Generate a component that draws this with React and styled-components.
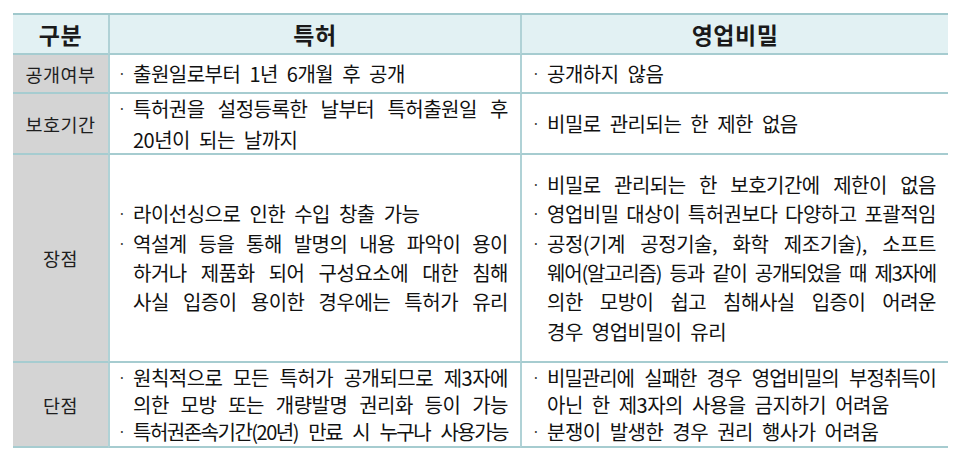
import React from "react";
import styled, { createGlobalStyle } from "styled-components";

const Global = createGlobalStyle`
  html, body { margin: 0; padding: 0; background: #ffffff; }
  body { font-family: "Noto Sans CJK KR", "Noto Sans", sans-serif; color: #111; }
`;

const Page = styled.div`
  padding: 13px 0 0 13px;
  width: 960px;
  height: 457px;
  box-sizing: border-box;
`;

const Table = styled.div`
  display: grid;
  width: 935px;
  grid-template-columns: 95px 412px 428px;
  grid-template-rows: 40px 39px 61px 208px 85px;
  border-top: 2px solid #a0c8cc;
`;

const Cell = styled.div`
  box-sizing: border-box;
  border-bottom: 2px solid #a6ccd0;
  border-left: ${(p) => (p.$first ? "none" : "2px solid #b0d2d6")};
  display: flex;
  flex-direction: column;
  justify-content: center;
  min-width: 0;
`;

const HeadCell = styled(Cell)`
  background: #e2f1f3;
  align-items: center;
  font-size: 23px;
  font-weight: 700;
  color: #1a1a1a;
  letter-spacing: 0.5px;
`;

const LabelCell = styled(Cell)`
  background: #d4d4d4;
  align-items: center;
  font-size: 18.5px;
  letter-spacing: 0.5px;
  color: #1e1e1e;
`;

const BodyCell = styled(Cell)`
  padding: 0 12px 0 ${(p) => p.$padLeft || 8}px;
  font-size: 20px;
  line-height: ${(p) => p.$lh || 29}px;
`;

const Item = styled.div`
  display: grid;
  grid-template-columns: 15px 1fr;
`;

const Dot = styled.span`
  color: #333;
  font-size: 14px;
`;

const Line = styled.span`
  display: block;
  white-space: nowrap;
  text-align: ${(p) => (p.$full ? "justify" : "left")};
  text-align-last: ${(p) => (p.$full ? "justify" : "auto")};
  word-spacing: ${(p) => (p.$full ? "0px" : "5px")};
  letter-spacing: ${(p) => p.$ls || "-0.5px"};
`;

const Body = ({ items, lh, padLeft }) => (
  <BodyCell $lh={lh} $padLeft={padLeft}>
    {items.map((it, i) => (
      <Item key={i}>
        <Dot>·</Dot>
        <div>
          {it.map((ln, j) => (
            <Line key={j} $full={ln.f} $ls={ln.ls}>
              {ln.t}
            </Line>
          ))}
        </div>
      </Item>
    ))}
  </BodyCell>
);

const L = (t, f, ls) => ({ t, f, ls });

const rows = [
  {
    label: "공개여부",
    lh: 29,
    a: [[L("출원일로부터 1년 6개월 후 공개")]],
    b: [[L("공개하지 않음")]],
  },
  {
    label: "보호기간",
    lh: 31,
    a: [[L("특허권을 설정등록한 날부터 특허출원일 후", true), L("20년이 되는 날까지")]],
    b: [[L("비밀로 관리되는 한 제한 없음")]],
  },
  {
    label: "장점",
    lh: 29.3,
    a: [
      [L("라이선싱으로 인한 수입 창출 가능")],
      [
        L("역설계 등을 통해 발명의 내용 파악이 용이", true),
        L("하거나 제품화 되어 구성요소에 대한 침해", true),
        L("사실 입증이 용이한 경우에는 특허가 유리", true),
      ],
    ],
    b: [
      [L("비밀로 관리되는 한 보호기간에 제한이 없음", true)],
      [L("영업비밀 대상이 특허권보다 다양하고 포괄적임", true)],
      [
        L("공정(기계 공정기술, 화학 제조기술), 소프트", true),
        L("웨어(알고리즘) 등과 같이 공개되었을 때 제3자에", true, "-1.2px"),
        L("의한 모방이 쉽고 침해사실 입증이 어려운", true),
        L("경우 영업비밀이 유리"),
      ],
    ],
  },
  {
    label: "단점",
    lh: 27.3,
    a: [
      [
        L("원칙적으로 모든 특허가 공개되므로 제3자에", true),
        L("의한 모방 또는 개량발명 권리화 등이 가능", true),
      ],
      [L("특허권존속기간(20년) 만료 시 누구나 사용가능", true, "-1.5px")],
    ],
    b: [
      [
        L("비밀관리에 실패한 경우 영업비밀의 부정취득이", true, "-1px"),
        L("아닌 한 제3자의 사용을 금지하기 어려움"),
      ],
      [L("분쟁이 발생한 경우 권리 행사가 어려움")],
    ],
  },
];

export default function App() {
  return (
    <Page>
      <Global />
      <Table>
        <HeadCell $first>구분</HeadCell>
        <HeadCell>특허</HeadCell>
        <HeadCell>영업비밀</HeadCell>
        {rows.map((r) => (
          <React.Fragment key={r.label}>
            <LabelCell $first>{r.label}</LabelCell>
            <Body items={r.a} lh={r.lh} padLeft={8} />
            <Body items={r.b} lh={r.lh} padLeft={10} />
          </React.Fragment>
        ))}
      </Table>
    </Page>
  );
}
